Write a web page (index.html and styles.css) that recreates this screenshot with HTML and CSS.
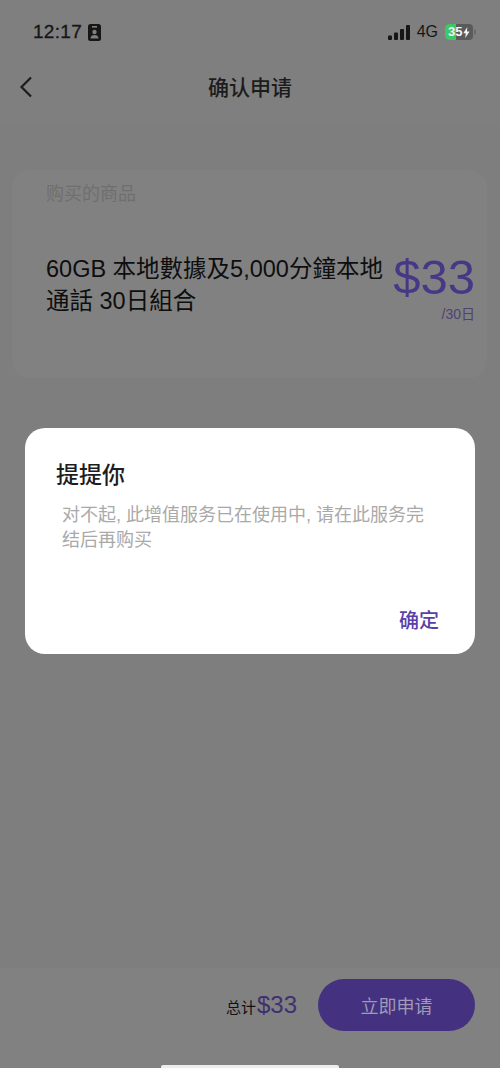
FILE: index.html
```html
<!DOCTYPE html>
<html lang="zh">
<head>
<meta charset="utf-8">
<title>确认申请</title>
<link rel="stylesheet" href="styles.css">
</head>
<body>
<div class="page">
  <header class="top">
    <div class="status">
      <div class="status-left">
        <span class="time">12:17</span>
        <svg class="id-icon" width="13" height="17" viewBox="0 0 13 17"><rect width="13" height="17" rx="2.5" fill="#161616"/><rect x="4" y="2" width="5" height="1.6" fill="#7f7f7f"/><circle cx="6.5" cy="8" r="2.2" fill="#7f7f7f"/><path d="M2.5 14.5c0-2.6 1.8-3.6 4-3.6s4 1 4 3.6z" fill="#7f7f7f"/></svg>
      </div>
      <div class="status-right">
        <svg width="22" height="15" viewBox="0 0 22 15"><rect x="0" y="10.500" width="4" height="4.500" rx="1" fill="#161616"/><rect x="6" y="7.500" width="4" height="7.500" rx="1" fill="#161616"/><rect x="12" y="4" width="4" height="11" rx="1" fill="#161616"/><rect x="18" y="0" width="4" height="15" rx="1" fill="#161616"/></svg>
        <span class="net">4G</span>
        <div class="battery">
          <div class="battery-fill"></div>
          <span class="battery-text">35</span>
          <svg class="bolt" width="7" height="11" viewBox="0 0 7 11"><path d="M4.300 0 0.300 6.300h2.500L2.200 11l4.400-6.600H4z" fill="#f2f2f2"/></svg>
        </div>
        <div class="battery-nub"></div>
      </div>
    </div>
    <div class="nav">
      <svg class="back" width="14" height="22" viewBox="0 0 14 22"><path d="M12 1.500 2.500 11 12 20.500" fill="none" stroke="#1c1c1c" stroke-width="2.200"/></svg>
      <h1 class="nav-title">确认申请</h1>
    </div>
  </header>

  <main class="content">
    <section class="card">
      <div class="card-label">购买的商品</div>
      <div class="card-row">
        <div class="product">60GB 本地數據及5,000分鐘本地通話 30日組合</div>
        <div class="price-box">
          <div class="price">$33</div>
          <div class="period">/30日</div>
        </div>
      </div>
    </section>
  </main>

  <footer class="bottom">
    <div class="total"><span class="total-label">总计</span><span class="total-price">$33</span></div>
    <button class="apply">立即申请</button>
  </footer>
  <div class="home-bar"></div>

  <div class="dialog">
    <h2 class="dialog-title">提提你</h2>
    <p class="dialog-text">对不起, 此增值服务已在使用中, 请在此服务完结后再购买</p>
    <div class="dialog-actions"><span class="dialog-ok">确定</span></div>
  </div>
</div>
</body>
</html>
```
FILE: styles.css
```css
* { box-sizing: border-box; }
html, body { margin: 0; padding: 0; }
body {
  font-family: "Liberation Sans", "Noto Sans CJK SC", sans-serif;
  background: #7e7e7e;
  overflow: hidden;
}
.page {
  position: relative;
  width: 500px;
  height: 1068px;
  display: flex;
  flex-direction: column;
  background: #7e7e7e;
  overflow: hidden;
}
.top {
  height: 122px;
  background: #7f7f7f;
  flex: none;
}
.status {
  height: 62px;
  padding: 22px 24px 0 33px;
  display: flex;
  justify-content: space-between;
  align-items: flex-start;
}
.status-left { display: flex; align-items: center; gap: 6px; height: 20px; }
.time { font-size: 19px; font-weight: 500; color: #161616; letter-spacing: 0.3px; -webkit-text-stroke: 0.3px #161616; }
.status-right { display: flex; align-items: center; height: 20px; }
.net { font-size: 16px; color: #161616; margin-left: 7px; }
.battery {
  position: relative;
  width: 28px;
  height: 16px;
  margin-left: 7px;
  border-radius: 4px;
  background: #5a5a5a;
  overflow: hidden;
  display: flex;
  align-items: center;
}
.battery-nub { width: 2px; height: 6px; margin-left: 1px; border-radius: 0 2px 2px 0; background: #6b6b6b; }
.battery-fill { position: absolute; left: 0; top: 0; bottom: 0; width: 11px; background: #3ec766; }
.battery-text { position: relative; font-size: 13px; font-weight: 700; color: #f2f2f2; margin-left: 3px; line-height: 16px; }
.bolt { position: relative; margin-left: 1px; }
.nav {
  position: relative;
  height: 60px;
  padding-bottom: 8px;
  display: flex;
  align-items: center;
  justify-content: center;
}
.back { position: absolute; left: 19px; top: 14px; }
.nav-title {
  margin: 0;
  font-size: 21px;
  font-weight: 500;
  color: #1c1c1c;
  line-height: 28px;
}
.content { flex: 1; padding: 48px 13px 0 12px; }
.card {
  height: 208px;
  border-radius: 18px;
  background: #818181;
  padding: 14px 12px 0 34px;
}
.card-label { font-size: 18px; color: #6f6f6f; line-height: 20px; }
.card-row {
  display: flex;
  justify-content: space-between;
  align-items: flex-start;
  margin-top: 49px;
}
.product {
  width: 342px;
  font-size: 23.5px;
  line-height: 32px;
  color: #0e0e0e;
}
.price-box { text-align: right; margin-top: -4px; }
.price { font-size: 49px; line-height: 56px; color: #473887; }
.period { font-size: 14px; line-height: 16px; color: #4e4272; margin-top: 1px; }
.bottom {
  flex: none;
  height: 100px;
  background: #818181;
  padding: 11px 25px 0 0;
  display: flex;
  justify-content: flex-end;
  align-items: flex-start;
}
.total { display: flex; align-items: baseline; margin: 12px 21px 0 0; }
.total-label { font-size: 15px; color: #111111; }
.total-price { font-size: 24px; color: #3f3070; margin-left: 1px; }
.apply {
  width: 157px;
  height: 52px;
  border: 0;
  border-radius: 26px;
  background: #44317f;
  color: #a09ab8;
  font: inherit;
  font-size: 18px;
}
.home-bar {
  position: absolute;
  left: 161px;
  bottom: 0;
  width: 178px;
  height: 3px;
  border-radius: 2px 2px 0 0;
  background: #ededed;
}
.dialog {
  position: absolute;
  left: 25px;
  top: 428px;
  width: 450px;
  height: 226px;
  border-radius: 20px;
  background: #ffffff;
  padding: 33px 36px 0 31px;
  display: flex;
  flex-direction: column;
}
.dialog-title {
  margin: 0;
  font-size: 23px;
  font-weight: 500;
  line-height: 28px;
  color: #1d1d1d;
}
.dialog-text {
  margin: 14px 0 0 6px;
  font-size: 18px;
  line-height: 25px;
  color: #a9a9a9;
}
.dialog-actions { margin-top: auto; padding-bottom: 20px; display: flex; justify-content: flex-end; }
.dialog-ok { font-size: 20px; font-weight: 500; line-height: 26px; color: #5a3fa8; }
```
